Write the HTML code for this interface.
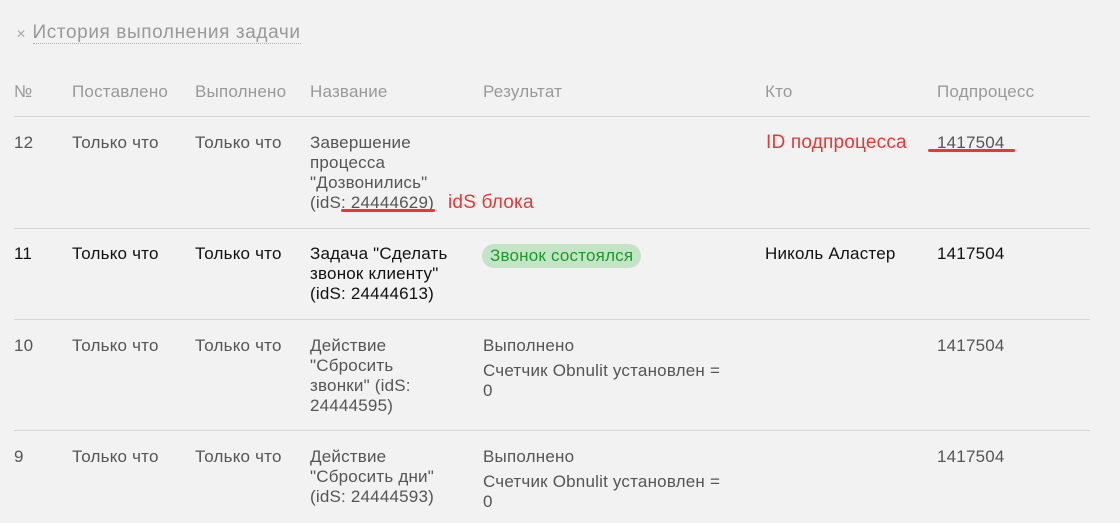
<!DOCTYPE html>
<html><head><meta charset="utf-8"><style>
body{margin:0;background:#f2f2f2;width:1120px;height:523px;overflow:hidden;position:relative;font-family:"Liberation Sans",sans-serif;font-size:17px;color:#555}
.t{position:absolute;line-height:20px;white-space:nowrap;letter-spacing:0.2px}
.h{color:#999}
.b{color:#111}
.l{position:absolute;left:14px;width:1076px;height:1px;background:#d6d6d6}
.r{color:#e53935}
</style></head><body>
<div class="t" style="left:16px;top:23px;font-size:19px;color:#999;letter-spacing:0.6px"><span style="font-size:12px;color:#aaa">✕</span> <span style="border-bottom:1px dotted #aaa">История выполнения задачи</span></div>

<div class="t h" style="left:14px;top:82px">№</div>
<div class="t h" style="left:72px;top:82px">Поставлено</div>
<div class="t h" style="left:195px;top:82px">Выполнено</div>
<div class="t h" style="left:310px;top:82px">Название</div>
<div class="t h" style="left:483px;top:82px">Результат</div>
<div class="t h" style="left:765px;top:82px">Кто</div>
<div class="t h" style="left:937px;top:82px">Подпроцесс</div>
<div class="l" style="top:116px"></div>

<div class="t" style="left:14px;top:133px">12</div>
<div class="t" style="left:72px;top:133px">Только что</div>
<div class="t" style="left:195px;top:133px">Только что</div>
<div class="t" style="left:310px;top:133px">Завершение<br>процесса<br>"Дозвонились"<br>(idS: 24444629)</div>
<div style="position:absolute;left:341px;top:209px;width:94px;height:3px;background:#e53935;border-radius:2px"></div>
<div class="t r" style="left:448px;top:193px;font-size:19px">idS блока</div>
<div class="t r" style="left:766px;top:133px;font-size:19px">ID подпроцесса</div>
<div class="t" style="left:937px;top:133px">1417504</div>
<div style="position:absolute;left:928px;top:149px;width:87px;height:3px;background:#e53935;border-radius:2px"></div>
<div class="l" style="top:228px"></div>

<div class="t b" style="left:14px;top:244px">11</div>
<div class="t b" style="left:72px;top:244px">Только что</div>
<div class="t b" style="left:195px;top:244px">Только что</div>
<div class="t b" style="left:310px;top:244px">Задача "Сделать<br>звонок клиенту"<br>(idS: 24444613)</div>
<div class="t" style="left:482px;top:244px;background:#c3e5c6;color:#1a9a2a;border-radius:12px;padding:2px 8px">Звонок состоялся</div>
<div class="t b" style="left:765px;top:244px">Николь Аластер</div>
<div class="t b" style="left:937px;top:244px">1417504</div>
<div class="l" style="top:319px"></div>

<div class="t" style="left:14px;top:336px">10</div>
<div class="t" style="left:72px;top:336px">Только что</div>
<div class="t" style="left:195px;top:336px">Только что</div>
<div class="t" style="left:310px;top:336px">Действие<br>"Сбросить<br>звонки" (idS:<br>24444595)</div>
<div class="t" style="left:483px;top:336px">Выполнено</div>
<div class="t" style="left:483px;top:361px">Счетчик Obnulit установлен =<br>0</div>
<div class="t" style="left:937px;top:336px">1417504</div>
<div class="l" style="top:430px"></div>

<div class="t" style="left:14px;top:447px">9</div>
<div class="t" style="left:72px;top:447px">Только что</div>
<div class="t" style="left:195px;top:447px">Только что</div>
<div class="t" style="left:310px;top:447px">Действие<br>"Сбросить дни"<br>(idS: 24444593)</div>
<div class="t" style="left:483px;top:447px">Выполнено</div>
<div class="t" style="left:483px;top:472px">Счетчик Obnulit установлен =<br>0</div>
<div class="t" style="left:937px;top:447px">1417504</div>
</body></html>
